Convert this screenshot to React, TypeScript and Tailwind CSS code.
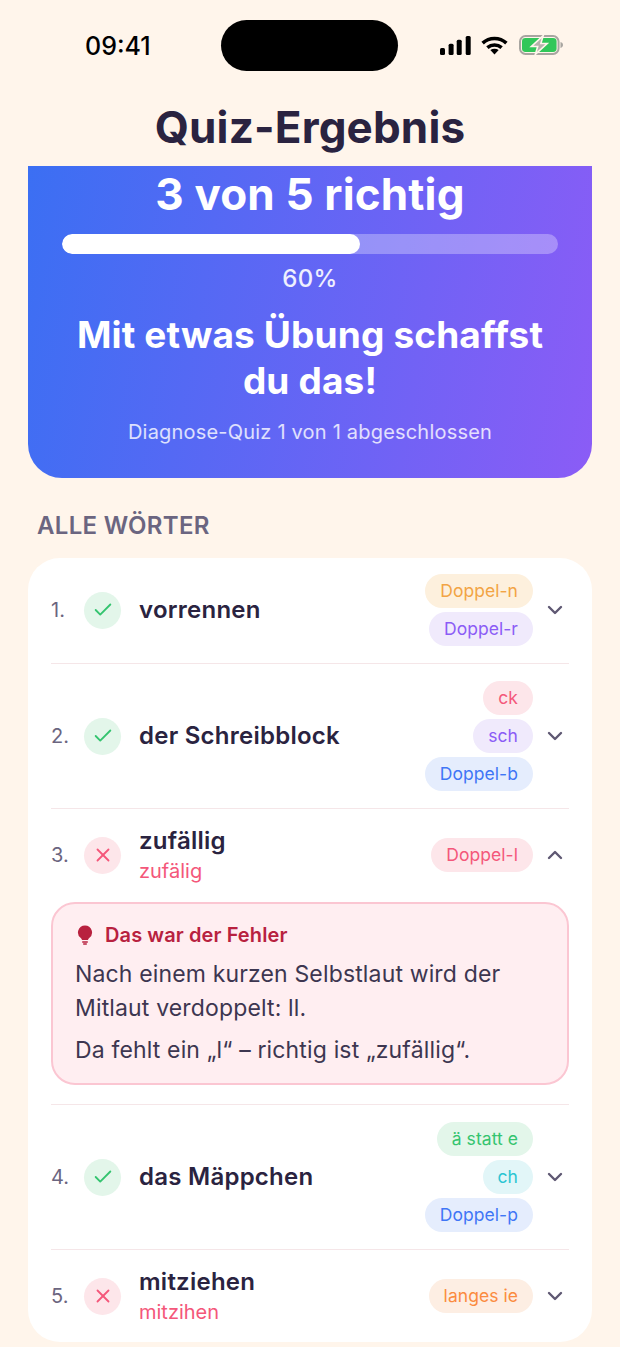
import { Check, ChevronDown, ChevronUp, X } from "lucide-react";

type Tag = { label: string; tone: string };

type Word = {
  nr: number;
  word: string;
  correct: boolean;
  typed?: string;
  open?: boolean;
  tags: Tag[];
};

const orange = "bg-[#fdf0dd] text-[#f2a444]";
const violet = "bg-[#f0eafc] text-[#8b5cf6]";
const rose = "bg-[#fde6ea] text-[#f4577a]";
const blue = "bg-[#e5edfd] text-[#3f76f6]";
const green = "bg-[#e3f6ea] text-[#34c46f]";
const cyan = "bg-[#e2f6f8] text-[#2cc5d2]";
const peach = "bg-[#fdeee3] text-[#fb8b3f]";

const words: Word[] = [
  {
    nr: 1,
    word: "vorrennen",
    correct: true,
    tags: [
      { label: "Doppel-n", tone: orange },
      { label: "Doppel-r", tone: violet },
    ],
  },
  {
    nr: 2,
    word: "der Schreibblock",
    correct: true,
    tags: [
      { label: "ck", tone: rose },
      { label: "sch", tone: violet },
      { label: "Doppel-b", tone: blue },
    ],
  },
  {
    nr: 3,
    word: "zufällig",
    correct: false,
    typed: "zufälig",
    open: true,
    tags: [{ label: "Doppel-l", tone: rose }],
  },
  {
    nr: 4,
    word: "das Mäppchen",
    correct: true,
    tags: [
      { label: "ä statt e", tone: green },
      { label: "ch", tone: cyan },
      { label: "Doppel-p", tone: blue },
    ],
  },
  {
    nr: 5,
    word: "mitziehen",
    correct: false,
    typed: "mitzihen",
    tags: [{ label: "langes ie", tone: peach }],
  },
];

function StatusIcons() {
  return (
    <div className="flex items-center">
      <svg width="31" height="19" viewBox="0 0 31 19" fill="#000">
        <rect x="0" y="12" width="5" height="7" rx="1.5" />
        <rect x="8.6" y="7.8" width="5" height="11.2" rx="1.5" />
        <rect x="16.7" y="3.8" width="5" height="15.2" rx="1.5" />
        <rect x="25.7" y="0" width="5" height="19" rx="1.5" />
      </svg>
      <svg className="ml-[10px]" width="27" height="19" viewBox="0 0 28 20" fill="none" stroke="#000" strokeWidth="3.8">
        <path d="M1.5 7.5C8.5 1 19.5 1 26.5 7.5" />
        <path d="M6.5 12.2C10.8 8.6 17.2 8.6 21.5 12.2" />
        <path d="M14 19.5l-4.4-4.8c2.6-1.8 6.2-1.8 8.8 0z" fill="#000" stroke="none" />
      </svg>
      <svg className="ml-[11px]" width="44" height="20" viewBox="0 0 44.5 20">
        <rect x="1" y="1" width="39" height="18" rx="5.5" fill="none" stroke="#a8a5a0" strokeWidth="2" />
        <rect x="3" y="3" width="35" height="14" rx="3.5" fill="#31c759" />
        <path d="M42 7c1.6.4 2.5 1.6 2.5 3s-.9 2.6-2.5 3z" fill="#a8a5a0" />
        <path d="M24.5 .5L12.5 11.5h6.4L16.5 19.5 28.5 8.5h-6.4z" fill="#b5b2ab" stroke="#fff5eb" strokeWidth="1.6" />
      </svg>
    </div>
  );
}

function Lightbulb() {
  return (
    <svg className="ml-[2px]" width="16" height="20" viewBox="0 0 16 20" fill="#b8213f">
      <path d="M8 0.5a7 7 0 0 0-4.2 12.6c.7.6 1.1 1.2 1.2 1.9h6c.1-.7.5-1.3 1.2-1.9A7 7 0 0 0 8 .5z" />
      <rect x="5" y="16.2" width="6" height="1.5" rx=".75" />
      <rect x="6" y="18.3" width="4" height="1.4" rx=".7" />
    </svg>
  );
}

function WordRow({ item }: { item: Word }) {
  const Chevron = item.open ? ChevronUp : ChevronDown;

  return (
    <div className="flex items-center">
      <span className="w-[33px] shrink-0 text-[20px] text-[#6b6580]">{item.nr}.</span>
      <div
        className={`flex h-[37px] w-[37px] shrink-0 items-center justify-center rounded-full ${
          item.correct ? "bg-[#e3f6ea] text-[#34c46f]" : "bg-[#fde6ea] text-[#f4577a]"
        }`}
      >
        {item.correct ? <Check size={22} strokeWidth={2} /> : <X size={22} strokeWidth={2} />}
      </div>
      <div className="ml-[18px] min-w-0 flex-1">
        <div className="text-[24px] leading-[32px] font-semibold tracking-[0.25px] text-[#2a2340]">{item.word}</div>
        {item.typed && <div className="text-[20px] leading-[28px] text-[#f4577a]">{item.typed}</div>}
      </div>
      <div className="flex flex-col items-end gap-[4px]">
        {item.tags.map((tag) => (
          <span key={tag.label} className={`flex h-[34px] items-center rounded-full px-[15px] text-[17.5px] font-normal tracking-[0.05px] ${tag.tone}`}>
            {tag.label}
          </span>
        ))}
      </div>
      <div className="flex w-[36px] shrink-0 justify-end pr-[2px]">
        <Chevron size={24} strokeWidth={2.4} className="text-[#5f5873]" />
      </div>
    </div>
  );
}

export default function App() {
  return (
    <div className="h-[1347px] overflow-hidden bg-[#fff5eb] font-['Inter',sans-serif]">
      {/* Status bar */}
      <div className="flex h-[88px] items-start pt-[20px] pr-[57px] pl-[85px]">
        <span className="mt-[8px] w-[136px] text-[25px] leading-[36px] font-medium text-black">09:41</span>
        <div className="h-[51px] w-[177px] rounded-full bg-black" />
        <div className="mt-[15px] ml-auto">
          <StatusIcons />
        </div>
      </div>

      <h1 className="h-[78px] text-center text-[44px] leading-[78px] font-bold tracking-[0.15px] text-[#2a2340]">Quiz-Ergebnis</h1>

      {/* Result card */}
      <div className="mx-[28px] flex h-[312px] flex-col items-center rounded-b-[34px] bg-linear-[100deg] from-[#3b6ff3] to-[#8b5cf6] px-[34px] text-white">
        <div className="text-[44px] leading-[56px] font-bold tracking-[0.15px]">3 von 5 richtig</div>
        <div className="mt-[12px] h-[20px] w-full overflow-hidden rounded-full bg-white/30">
          <div className="h-full w-[60%] rounded-full bg-white" />
        </div>
        <div className="mt-[8px] text-[24px] leading-[34px] font-medium tracking-[0.3px] text-white/90">60%</div>
        <div className="mt-[16px] -mx-[10px] text-center text-[37px] leading-[46px] font-bold tracking-[0.15px]">Mit etwas Übung schaffst du das!</div>
        <div className="mt-[14px] text-[20px] leading-[28px] tracking-[0.2px] text-white/80">Diagnose-Quiz 1 von 1 abgeschlossen</div>
      </div>

      <h2 className="mt-[31px] ml-[37px] text-[24px] leading-[34px] font-semibold tracking-[0.3px] text-[#6b6580]">ALLE WÖRTER</h2>

      {/* Word list */}
      <div className="mx-[28px] mt-[15px] rounded-[32px] bg-white px-[23px]">
        {words.map((item) => (
          <div key={item.nr} className={`border-[#f5e6e8] ${item.nr < 5 ? "border-b" : ""}`}>
            <div className={item.tags.length === 3 ? "pt-[17px] pb-[17px]" : item.nr === 5 ? "pt-[16px] pb-[16px]" : "pt-[16px] pb-[17px]"}>
              <WordRow item={item} />
            </div>
            {item.open && (
              <div className="mb-[19px] rounded-[24px] border-2 border-[#fbc6d2] bg-[#ffeef1] px-[22px] pt-[17px] pb-[16px]">
                <div className="flex items-center gap-[12px] text-[20px] leading-[28px] font-semibold tracking-[0.1px] text-[#b8213f]">
                  <Lightbulb />
                  Das war der Fehler
                </div>
                <p className="mt-[8px] text-[23px] leading-[34px] tracking-[0.15px] text-[#3d3650]">
                  Nach einem kurzen Selbstlaut wird der Mitlaut verdoppelt: ll.
                </p>
                <p className="mt-[8px] text-[23px] leading-[34px] tracking-[0.15px] text-[#3d3650]">Da fehlt ein „l“ – richtig ist „zufällig“.</p>
              </div>
            )}
          </div>
        ))}
      </div>
    </div>
  );
}
